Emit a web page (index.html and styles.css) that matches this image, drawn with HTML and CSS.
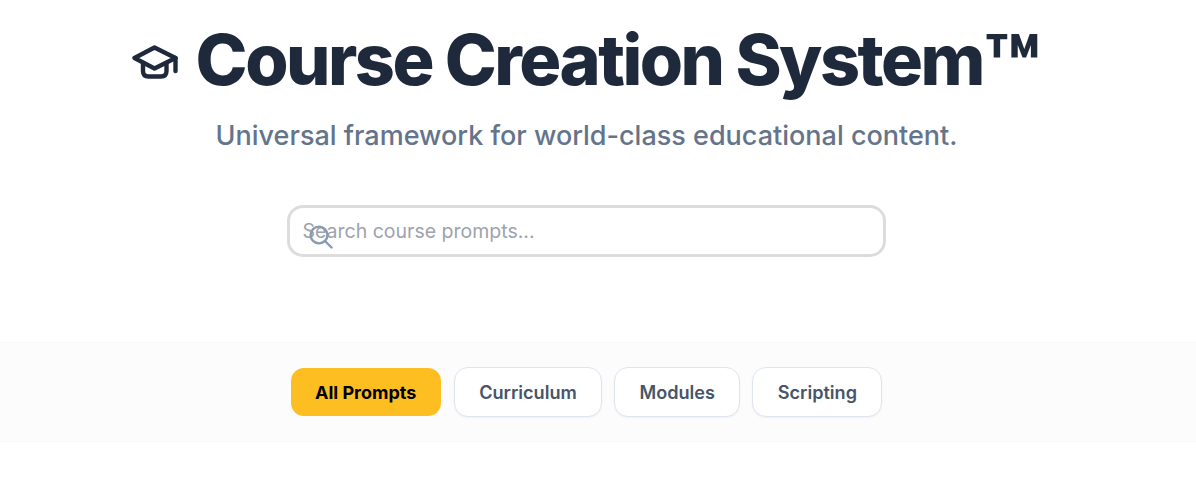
FILE: index.html
```html
<!DOCTYPE html>
<html>
<head>
    <meta charset="UTF-8">
    <title>Course Creation System</title>
    <link rel="stylesheet" href="styles.css">
</head>
<body>
    <header class="hero">
        <h1 class="hero-title">
            <svg class="hero-icon" viewBox="0 0 46 34" fill="none" stroke="currentColor" stroke-width="4.4" stroke-linecap="round" stroke-linejoin="round">
                <path d="M22.5 2.5 L2.5 13 L22.5 23.5 L43.5 13 Z"/>
                <path d="M11 18 V26 Q11 31.5 16.5 31.5 H29 Q34.5 31.5 34.5 26 V18"/>
                <path d="M43.5 13 V26"/>
            </svg>
            <span>Course Creation System<span class="hero-tm">™</span></span>
        </h1>
        <p class="hero-subtitle">Universal framework for world-class educational content.</p>
        <div class="search-box">
            <input class="search-input" type="text" placeholder="Search course prompts...">
            <svg class="search-icon" viewBox="0 0 24 24" fill="none" stroke="currentColor" stroke-width="2.4" stroke-linecap="round">
                <circle cx="10" cy="10" r="8.4"/>
                <path d="M16 16 L22.5 22.5"/>
            </svg>
        </div>
    </header>

    <nav class="filter-bar">
        <div class="filter-row">
            <button class="filter-button active">All Prompts</button>
            <button class="filter-button">Curriculum</button>
            <button class="filter-button">Modules</button>
            <button class="filter-button">Scripting</button>
        </div>
    </nav>
</body>
</html>
```

FILE: styles.css
```css
* {
    box-sizing: border-box;
    margin: 0;
    padding: 0;
}

html, body {
    overflow: hidden;
}

body {
    font-family: Inter, "Liberation Sans", sans-serif;
    background-color: #fff;
    height: 480px;
}

.hero {
    display: flex;
    flex-direction: column;
    align-items: center;
    width: 1173px;
    padding-top: 14px;
}

.hero-title {
    display: flex;
    align-items: center;
    justify-content: center;
    gap: 18px;
    font-size: 70px;
    font-weight: 800;
    line-height: 92px;
    color: #1e293b;
    letter-spacing: -2.5px;
    white-space: nowrap;
}

.hero-tm {
    font-size: 1.28em;
    letter-spacing: 0;
    line-height: 0;
    vertical-align: -14px;
}

.hero-icon {
    width: 46px;
    height: 34px;
    margin-top: 3px;
}

.hero-subtitle {
    margin-top: 8px;
    font-size: 27px;
    font-weight: 500;
    line-height: 44px;
    color: #64748b;
}

.search-box {
    position: relative;
    width: 599px;
    margin-top: 47px;
    margin-right: 1px;
}

.search-input {
    display: block;
    width: 100%;
    height: 52px;
    padding: 0 13px;
    border: 3px solid #dcdcdc;
    border-radius: 16px;
    font-family: inherit;
    font-size: 19.5px;
    background: #fff;
    outline: none;
}

.search-input::placeholder {
    color: #9ca3af;
}

.search-icon {
    position: absolute;
    left: 22px;
    top: 20px;
    width: 24px;
    height: 24px;
    color: #8a9ab0;
}

.filter-bar {
    height: 100px;
    margin-top: 85px;
    padding-top: 24px;
    background-color: #fcfcfd;
    border-top: 1px solid #fafafa;
    border-bottom: 1px solid #fafafa;
}

.filter-row {
    display: flex;
    justify-content: center;
    gap: 12px;
    width: 1172px;
}

.filter-button {
    height: 50px;
    padding: 0 24.4px;
    border: 1px solid #dfe5f0;
    border-radius: 14px;
    background-color: #fff;
    color: #475569;
    font-family: inherit;
    font-size: 18.1px;
    font-weight: 600;
    box-shadow: 0 1px 2px rgba(0, 0, 0, 0.05);
    cursor: pointer;
}

.filter-button.active {
    border-color: transparent;
    background-color: #fdbe22;
    background-clip: padding-box;
    color: #000;
    font-size: 18px;
    font-weight: 700;
    box-shadow: none;
}
```
